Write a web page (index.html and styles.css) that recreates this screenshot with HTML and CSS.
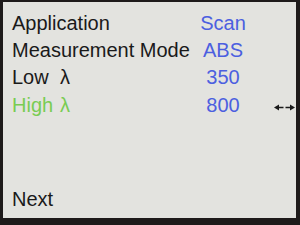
FILE: index.html
```html
<!DOCTYPE html>
<html lang="en">
<head>
    <meta charset="UTF-8">
    <meta name="viewport" content="width=device-width, initial-scale=1.0">
    <title>Scan Setup</title>
    <link rel="stylesheet" href="styles.css">
</head>
<body>
    <div class="bezel">
        <div class="screen">
            <div class="menu">
                <div class="label">Application</div>
                <div class="value">Scan</div>
                <div></div>

                <div class="label">Measurement Mode</div>
                <div class="value">ABS</div>
                <div></div>

                <div class="label"><span class="name">Low</span>λ</div>
                <div class="value">350</div>
                <div></div>

                <div class="label active"><span class="name">High</span>λ</div>
                <div class="value">800</div>
                <div class="adjust">
                    <svg width="21" height="7" viewBox="0 0 21 7">
                        <path d="M3 3.5H9.5M11.5 3.5H18" stroke="#1a1a1a" stroke-width="1.4"/>
                        <path d="M0 3.5L5 0.6V6.4Z" fill="#1a1a1a"/>
                        <path d="M21 3.5L16 0.6V6.4Z" fill="#1a1a1a"/>
                    </svg>
                </div>
            </div>
            <div class="footer">Next</div>
        </div>
    </div>
</body>
</html>
```
FILE: styles.css
```css
body {
    margin: 0;
    width: 300px;
    height: 225px;
    overflow: hidden;
    font-family: "Liberation Sans", Arial, sans-serif;
}
.bezel {
    box-sizing: border-box;
    width: 300px;
    height: 225px;
    padding: 2px 4px 7px 3px;
    background-color: #1e1a1a;
}
.screen {
    box-sizing: border-box;
    height: 100%;
    display: flex;
    flex-direction: column;
    padding: 7.5px 0 5.5px 9px;
    background-color: #e3e3df;
    font-size: 20px;
    line-height: 27px;
    color: #1a1a1a;
}
.menu {
    display: grid;
    grid-template-columns: 178px 66px auto;
    align-items: center;
}
.label .name {
    display: inline-block;
    width: 48px;
}
.label.active {
    color: #79cc52;
}
.value {
    text-align: center;
    color: #4c5fe0;
}
.adjust {
    display: flex;
    align-items: center;
    height: 27px;
    margin: 3px 0 0 18px;
}
.footer {
    margin-top: auto;
}
```
